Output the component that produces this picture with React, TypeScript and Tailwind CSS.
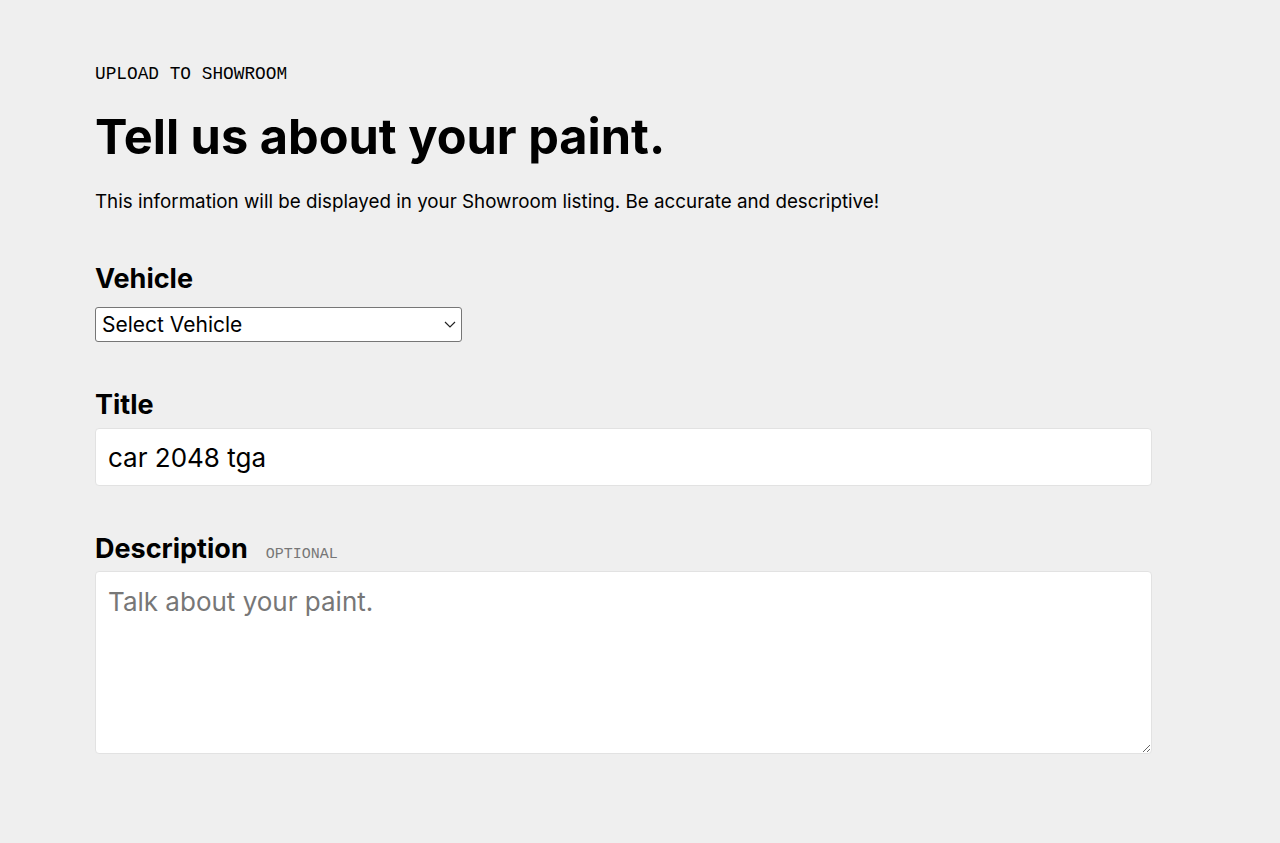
export default function App() {
  return (
    <div className="min-h-[843px] bg-[#efefef] font-['Inter',sans-serif] text-black">
      <div className="ml-[95px] w-[1057px] pt-[64px]">
        <p className="font-['Liberation_Mono',monospace] text-[17.8px] leading-[20px]">
          UPLOAD TO SHOWROOM
        </p>
        <h1 className="mt-[24px] text-[48.7px] font-bold leading-[58px]">
          Tell us about your paint.
        </h1>
        <p className="mt-[24px] text-[18.8px] leading-[24px]">
          This information will be displayed in your Showroom listing. Be accurate and descriptive!
        </p>

        <div className="mt-[49px]">
          <label className="block text-[27px] font-bold leading-[32px]">Vehicle</label>
          <div className="relative mt-[12px] w-[367px]">
            <select className="block h-[35px] w-full appearance-none rounded-[3px] border border-[#767676] bg-white pl-[6px] text-[21px] outline-none">
              <option>Select Vehicle</option>
            </select>
            <svg
              className="pointer-events-none absolute right-[6px] top-[14px] h-[7px] w-[12px]"
              viewBox="0 0 12 7"
              fill="none"
              stroke="#222"
              strokeWidth="1.2"
            >
              <path d="M1 1l5 5 5-5" />
            </svg>
          </div>
        </div>

        <div className="mt-[47px]">
          <label className="block text-[27px] font-bold leading-[32px]">Title</label>
          <input
            defaultValue="car 2048 tga"
            className="mt-[7px] block h-[58px] w-full rounded-[4px] border border-[#e2e2e2] bg-white px-[12px] text-[26px] outline-none"
          />
        </div>

        <div className="mt-[47px]">
          <div className="flex items-baseline gap-[18px]">
            <label className="text-[27px] font-bold leading-[32px]">Description</label>
            <span className="font-['Liberation_Mono',monospace] text-[15px] text-[#777]">
              OPTIONAL
            </span>
          </div>
          <textarea
            placeholder="Talk about your paint."
            className="mt-[4px] block h-[183px] w-full rounded-[4px] border border-[#e2e2e2] bg-white px-[12px] py-[14px] text-[26px] leading-[32px] outline-none placeholder:text-[#777]"
          />
        </div>
      </div>
    </div>
  );
}
